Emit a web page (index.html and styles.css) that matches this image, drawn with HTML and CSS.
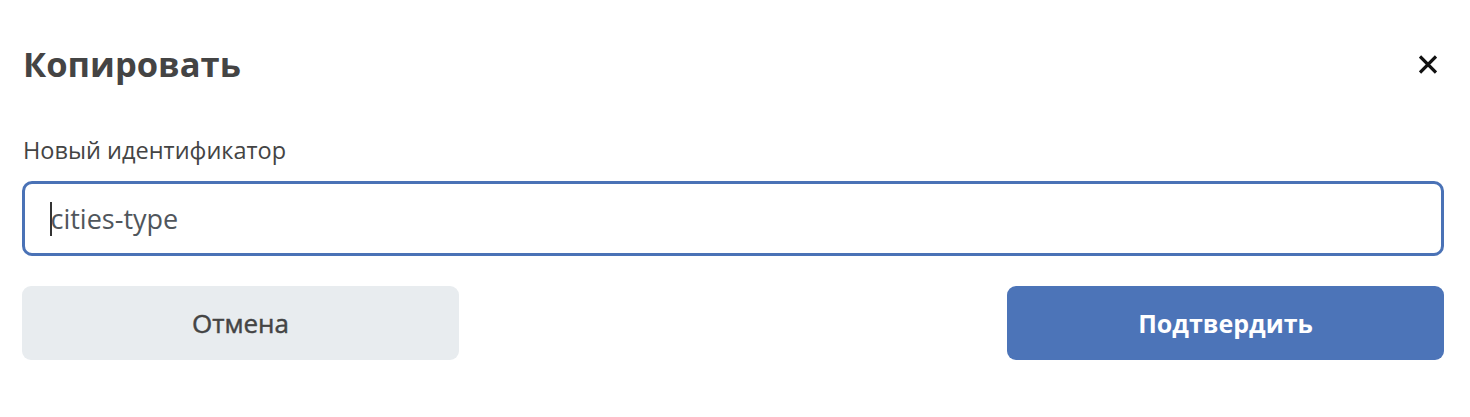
FILE: index.html
```html
<!DOCTYPE html>
<html lang="ru">
<head>
<meta charset="utf-8">
<link rel="stylesheet" href="styles.css">
</head>
<body>
<div class="dialog">
  <div class="header">
    <h1 class="title">Копировать</h1>
    <button class="close" aria-label="Закрыть">
      <svg width="18" height="19" viewBox="0 0 18 19"><path d="M1 1.5L17 17.5M17 1.5L1 17.5" stroke="#111" stroke-width="3.2" stroke-linecap="butt"/></svg>
    </button>
  </div>
  <label class="label" for="newid">Новый идентификатор</label>
  <div class="input"><span class="caret"></span><span class="value">cities-type</span></div>
  <div class="actions">
    <button class="btn btn-cancel">Отмена</button>
    <button class="btn btn-confirm">Подтвердить</button>
  </div>
</div>
</body>
</html>
```
FILE: styles.css
```css
html, body {
  margin: 0;
  padding: 0;
  background: #fff;
}
body {
  font-family: "Open Sans", "Noto Sans", sans-serif;
  color: #444;
}
.dialog {
  padding: 38px 26px 0 22px;
  width: 1422px;
}
.header {
  display: flex;
  align-items: center;
  justify-content: space-between;
  height: 52px;
}
.title {
  margin: 0;
  font-size: 34.5px;
  font-weight: 700;
  color: #444;
  line-height: 52px;
  padding-left: 1px;
}
.close {
  border: 0;
  background: none;
  padding: 0;
  margin-right: 7px;
  margin-top: 1px;
  width: 18px;
  height: 19px;
  display: flex;
}
.label {
  display: block;
  margin-top: 45px;
  font-size: 23.5px;
  line-height: 30px;
  color: #444;
  padding-left: 1px;
}
.input {
  margin-top: 16px;
  height: 75px;
  box-sizing: border-box;
  border: 3px solid #4a72b6;
  border-radius: 10px;
  display: flex;
  align-items: center;
  padding-left: 25px;
}
.caret {
  width: 1.5px;
  height: 34px;
  background: #333;
  margin-right: -1px;
}
.value {
  font-size: 27px;
  color: #50565c;
}
.actions {
  display: flex;
  justify-content: space-between;
  margin-top: 30px;
}
.btn {
  width: 437px;
  height: 74px;
  border: 0;
  border-radius: 9px;
  font-family: "Open Sans", "Noto Sans", sans-serif;
  padding: 0;
}
.btn-cancel {
  background: #e8ecef;
  color: #444;
  font-weight: 500;
  font-size: 26px;
  -webkit-text-stroke: 0.45px #444;
}
.btn-confirm {
  background: #4c74b8;
  color: #fff;
  font-weight: 700;
  font-size: 25px;
}
```
